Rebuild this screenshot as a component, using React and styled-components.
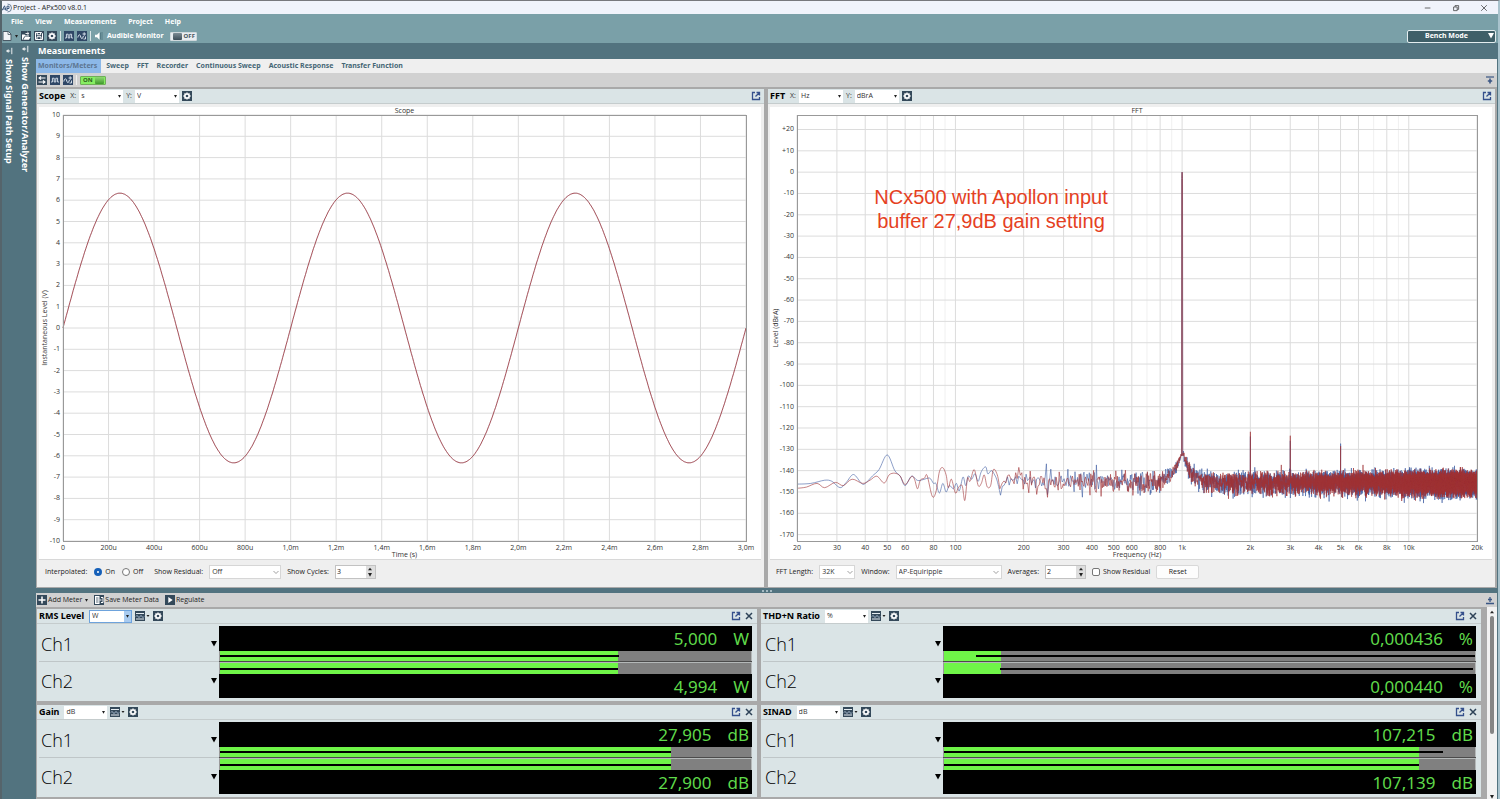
import React, { useLayoutEffect, useMemo, useRef, useState } from "react";
import styled, { createGlobalStyle, css } from "styled-components";

const Global = createGlobalStyle`
  * { box-sizing: border-box; }
  body { margin: 0; background: #fff; color: #222; font: 7px/10px "Open Sans", "Noto Sans", sans-serif; }
  button, input, select { font: inherit; color: inherit; margin: 0; padding: 0; border: 0; border-radius: 0; background: none; }
`;

const bold = css`
  font-family: "Noto Sans", "Open Sans", sans-serif;
  font-weight: 700;
`;

/* ---------- window frame ---------- */
const Window = styled.div`
  height: 100vh;
  display: flex;
  flex-direction: column;
  overflow: hidden;
  border-top: 1px solid #77787d;
  border-left: 2px solid #55646b;
  border-right: 2px solid #a9c3cd;
`;
const TitleBar = styled.header`
  height: 13px;
  flex: none;
  display: flex;
  align-items: center;
  gap: 1px;
  padding-right: 10px;
  background: #f0f3fb;
  color: #222;
`;
const TitleText = styled.h1`
  margin: 0;
  flex: 1;
  font-size: 7px;
  font-weight: 400;
`;
const WindowButton = styled.button`
  width: 8px;
  height: 10px;
  margin-left: 19px;
  display: grid;
  place-items: center;
`;
const MenuBar = styled.nav`
  height: 15px;
  flex: none;
  display: flex;
  align-items: center;
  gap: 12px;
  padding: 1px 0 0 9px;
  background: #7aa0a8;
`;
const MenuItem = styled.button`
  ${bold}
  color: #fff;
`;
const MainTools = styled.div`
  ${bold}
  height: 14px;
  flex: none;
  display: flex;
  align-items: center;
  gap: 3px;
  padding-right: 2px;
  background: #7aa0a8;
  color: #fff;
`;
const Spacer = styled.div`
  flex: 1;
`;
const Divider = styled.span`
  width: 1px;
  height: 10px;
  background: ${(p) => p.$color || "#dbe6e8"};
`;
const IconButton = styled.button`
  width: ${(p) => (p.$wide ? 15 : 10)}px;
  height: 10px;
  display: grid;
  place-items: center;
  flex: none;
`;
const Toggle = styled.button`
  ${bold}
  height: 9px;
  display: flex;
  align-items: center;
  gap: 2px;
  margin-left: ${(p) => (p.$on ? 0 : 3)}px;
  padding: 0 1px 0 2px;
  border-radius: 1px;
  font-size: 6px;
  line-height: 8px;
  color: ${(p) => (p.$on ? "#2c5d1d" : "#45545c")};
  background: ${(p) => (p.$on ? "#86ee62" : "#e9edf1")};
  border: 1px solid ${(p) => (p.$on ? "#6fae58" : "#cfd8dc")};
  flex-direction: ${(p) => (p.$on ? "row" : "row-reverse")};
  &::after {
    content: "";
    width: 9px;
    height: 7px;
    border-radius: 1px;
    background: ${(p) => (p.$on ? "linear-gradient(#8fd873,#3f9a2c)" : "linear-gradient(#7d8c95,#3c4d58)")};
  }
`;
const BenchMode = styled.button`
  ${bold}
  width: 89px;
  height: 13px;
  display: flex;
  align-items: center;
  padding: 0 1px 0 17px;
  border: 1px solid #e4edef;
  border-radius: 2px;
  background: #3f5f68;
  color: #fff;
  span { flex: 1; text-align: left; }
`;

/* ---------- body ---------- */
const Body = styled.div`
  flex: 1;
  min-height: 0;
  display: flex;
  background: #52737f;
`;
const Rail = styled.aside`
  width: 34px;
  flex: none;
  display: flex;
  align-items: flex-start;
  gap: 3px;
`;
const RailTab = styled.button`
  width: 13px;
  padding-top: ${(p) => (p.$first ? 4 : 2)}px;
  display: flex;
  flex-direction: column;
  align-items: center;
  gap: 4px;
  color: #fff;
  span {
    ${bold}
    writing-mode: vertical-rl;
    font-size: 9px;
    line-height: 10px;
    white-space: nowrap;
  }
`;
const Main = styled.main`
  flex: 1;
  min-width: 0;
  display: flex;
  flex-direction: column;
`;
const SectionTitle = styled.h2`
  ${bold}
  height: 16px;
  flex: none;
  margin: 0;
  padding-left: 2px;
  color: #fff;
  font-size: 9px;
  line-height: 16px;
`;
const Tabs = styled.nav`
  height: 14px;
  flex: none;
  display: flex;
  gap: 3px;
  margin-right: 1px;
  background: #efefef;
`;
const Tab = styled.button`
  ${bold}
  padding: 0 3px 0 2px;
  line-height: 14px;
  color: ${(p) => (p.$active ? "#5c7591" : "#446675")};
  background: ${(p) => (p.$active ? "#8cb8e8" : "transparent")};
  &:first-child { padding-right: 4px; }
`;
const ToolStrip = styled.div`
  height: 14px;
  flex: none;
  display: flex;
  align-items: center;
  gap: ${(p) => p.$gap || 3}px;
  padding: 0 2px 0 1px;
  margin-right: 1px;
  background: #d1d1d1;
`;
const TextButton = styled.button`
  display: flex;
  align-items: center;
  gap: 1px;
  svg:last-child { margin-left: ${(p) => (p.$menu ? 2 : 0)}px; }
`;

/* ---------- graph panels ---------- */
const Graphs = styled.div`
  flex: 1;
  min-height: 0;
  display: grid;
  grid-template-columns: repeat(2, minmax(0, 1fr));
  gap: 4px;
  padding: 2px 2px 1px 1px;
  margin-right: 1px;
  background: #a9a9a9;
`;
const Panel = styled.section`
  min-width: 0;
  display: flex;
  flex-direction: column;
  background: #efefef;
`;
const PanelHead = styled.div`
  height: 15px;
  flex: none;
  display: flex;
  align-items: center;
  gap: 3px;
  padding: 0 3px 0 2px;
  background: #dae4e6;
  border-bottom: 1px solid #c5cccd;
  h3 { ${bold} margin: 0 2px 0 0; font-size: 9px; color: #000; white-space: nowrap; }
  label { display: flex; align-items: center; gap: 3px; color: #333; }
`;
const SelectBox = styled.span`
  display: inline-grid;
  align-items: center;
  width: ${(p) => p.$width}px;
  height: ${(p) => p.$height || 13}px;
  background: #fff;
  color: #333;
  ${(p) => p.$framed && css`border: 1px solid #d6d6d6;`}
  ${(p) => p.$focused && css`border: 1px solid #6ea3dc;`}
  > * { grid-area: 1 / 1; }
  select {
    appearance: none;
    width: 100%;
    height: 100%;
    padding-left: 2px;
    outline: 0;
  }
`;
const SelectArrow = styled.span`
  justify-self: end;
  height: 100%;
  width: 7px;
  margin-right: ${(p) => (p.$inset ? 1 : 0)}px;
  display: grid;
  place-items: center;
  pointer-events: none;
  background: ${(p) => (p.$focused ? "#a9cbf0" : "transparent")};
`;
const ChartArea = styled.div`
  flex: 1;
  min-height: 0;
  margin: 3px 3px 0 2px;
  background: #fff;
  overflow: hidden;
  border-bottom: 1px solid #d8d8d8;
  svg { display: block; }
`;
const Controls = styled.form`
  height: 27px;
  flex: none;
  display: flex;
  align-items: center;
  gap: 6px;
  padding: 0 8px 3px;
  color: #222;
`;
const RadioGroup = styled.span`
  display: flex;
  gap: 7px;
  margin: 0 5px 0 1px;
`;
const Field = styled.label`
  display: flex;
  align-items: center;
  gap: ${(p) => p.$gap || 6}px;
  white-space: nowrap;
`;
const Radio = styled.input`
  appearance: none;
  width: 8px;
  height: 8px;
  border: 1px solid #777;
  border-radius: 50%;
  background: #fff;
  &:checked { border: 3px solid #1660b8; }
`;
const Check = styled.input`
  appearance: none;
  width: 8px;
  height: 8px;
  border: 1px solid #777;
  border-radius: 2px;
  background: #fff;
`;
const Spin = styled.span`
  display: flex;
  width: 41px;
  height: 14px;
  border: 1px solid #c2c2c2;
  background: #fff;
  input { flex: 1; min-width: 0; padding: 0 1px 1px; outline: 0; }
`;
const SpinButtons = styled.span`
  width: 9px;
  display: grid;
  grid-template-rows: 1fr 1fr;
  background: #dedede;
  button { display: grid; place-items: center; }
`;
const ResetButton = styled.button`
  width: 43px;
  height: 14px;
  border: 1px solid #d9d9d9;
  border-radius: 2px;
  background: #fdfdfd;
`;
const Splitter = styled.div`
  height: 5px;
  flex: none;
  display: flex;
  justify-content: center;
  align-items: center;
  gap: 2px;
  i { width: 2px; height: 2px; background: #a5bac2; }
`;

/* ---------- meters ---------- */
const Meters = styled.div`
  height: 192px;
  flex: none;
  display: flex;
  margin-right: 1px;
  overflow: hidden;
  background: #a9a9a9;
`;
const MeterGrid = styled.div`
  flex: 1;
  min-width: 0;
  display: grid;
  grid-template-columns: repeat(2, minmax(0, 1fr));
  grid-auto-rows: 92px;
  gap: 4px;
  padding: 2px 6px 2px 1px;
`;
const MeterCard = styled.section`
  display: flex;
  flex-direction: column;
  background: #dae4e6;
`;
const MeterBody = styled.div`
  display: grid;
  grid-template-columns: 180px minmax(0, 1fr);
  padding: 2px 5px 0 2px;
`;
const Channel = styled.div`
  height: 36px;
  display: flex;
  align-items: center;
  justify-content: space-between;
  padding: 1px 2px 0;
  border-bottom: ${(p) => (p.$second ? "0" : "1px solid #bfc6c8")};
  font: 300 18px/24px "Open Sans", "Noto Sans", sans-serif;
  color: #000;
`;
const Readout = styled.div`
  height: 36px;
  display: flex;
  flex-direction: ${(p) => (p.$second ? "column-reverse" : "column")};
  justify-content: flex-start;
  border-bottom: ${(p) => (p.$second ? "0" : "1px solid #4b4b4b")};
`;
const Value = styled.div`
  height: ${(p) => (p.$second ? 24 : 25)}px;
  display: flex;
  align-items: center;
  justify-content: flex-end;
  gap: 16px;
  padding-right: 3px;
  padding-top: 1px;
  background: #000;
  color: #5fd94a;
  font: 17px/24px "Noto Sans", sans-serif;
`;
const Track = styled.div`
  height: ${(p) => (p.$second ? 12 : 10)}px;
  display: grid;
  align-items: center;
  border: solid #b4b8b8;
  border-width: ${(p) => (p.$second ? "1px 1px 0 0" : "0 1px 0 0")};
  border-left: 1px solid #9a9a9a;
  background: #808080;
  > * { grid-area: 1 / 1; }
`;
const Fill = styled.span`
  height: 100%;
  background: #6ff548;
`;
const Line = styled.span`
  height: 2px;
  background: #000;
`;
const ScrollBar = styled.div`
  width: 10px;
  flex: none;
  display: flex;
  flex-direction: column;
  align-items: center;
  justify-content: space-between;
  padding: 3px 0 0;
  background: #f2f2f2;
`;
const Thumb = styled.div`
  width: 4px;
  height: 118px;
  margin: 2px 0 auto;
  border-radius: 2px;
  background: #858585;
`;

/* ---------- icons ---------- */
const DARK = "#34495a";
const ICONS = {
  gear: (
    <>
      <rect width="10" height="10" fill={DARK} />
      <path d="M5 1.4v7.200M1.400 5h7.200M2.500 2.500l5 5M2.500 7.500l5-5" stroke="#fff" strokeWidth="1.300" />
      <circle cx="5" cy="5" r="2.100" fill={DARK} stroke="#fff" strokeWidth="1.500" />
    </>
  ),
  pulse: (
    <>
      <rect width="10" height="10" fill="#2f4766" />
      <path d="M1 7h1.400V3.200h1.800V7h1.600V3.200h1.800V7H9" fill="none" stroke="#dfe8f2" strokeWidth=".9" />
    </>
  ),
  sweep: (
    <>
      <rect width="10" height="10" fill="#2f4766" />
      <path d="M.8 6.500c1-3.600 2-3.600 3-.5s1.800 1.500 2.600-1" fill="none" stroke="#dfe8f2" strokeWidth="1" />
      <path d="M5.500 3h3.500M7.200 1.300v3.500M8.500 5.500v2.500H6.500" fill="none" stroke="#dfe8f2" strokeWidth=".9" />
    </>
  ),
  file: (
    <>
      <path d="M1 .5h5.500l2.500 2.500v6.500H1z" fill="#f3f5f7" stroke="#4a5a66" />
      <path d="M6 .5v3h3" fill="none" stroke="#4a5a66" strokeWidth=".8" />
    </>
  ),
  open: (
    <>
      <rect width="10" height="10" fill={DARK} />
      <path d="M1 8.800V3.500h2.500l1 1H8v1H3.200L1.600 8.800z M2.300 8.800l1.600-2.700H9.500L8 8.800z" fill="#fff" />
      <path d="M4.500 2.500h3M6.300 1l1.600 1.500L6.300 4" fill="none" stroke="#fff" strokeWidth=".9" />
    </>
  ),
  save: (
    <>
      <rect width="10" height="10" fill={DARK} />
      <path d="M1.500 1.500h6l1 1v6h-7z" fill="none" stroke="#fff" />
      <path d="M3.200 1.500v2.300h3.400V1.500M3 8.500V5.700h4v2.800" fill="none" stroke="#fff" />
    </>
  ),
  route: (
    <>
      <rect width="10" height="10" fill={DARK} />
      <path d="M2.500 3h6M1.500 7h6M4 1.300L2 3l2 1.700M6 5.300L8 7 6 8.700" fill="none" stroke="#fff" strokeWidth="1.100" />
    </>
  ),
  plus: (
    <>
      <rect width="10" height="10" fill={DARK} />
      <path d="M5 1.500v7M1.500 5h7" stroke="#fff" strokeWidth="1.500" />
    </>
  ),
  saveData: (
    <>
      <rect width="10" height="10" fill={DARK} />
      <path d="M1 1h4.500v8H1z" fill="#fff" />
      <path d="M2 3h2.500M2 5h2.500M2 7h2.500" stroke={DARK} strokeWidth=".8" />
      <path d="M5.500 5h2M7 2.500h2v5H7" fill="none" stroke="#fff" strokeWidth="1" />
    </>
  ),
  play: (
    <>
      <rect width="10" height="10" fill={DARK} />
      <path d="M3.300 2l4.400 3-4.400 3z" fill="#fff" />
    </>
  ),
  popout: (
    <path d="M4 1.500H1.500v7h7V6M5.500 1.500h3v3M8.300 1.700L4.500 5.500" fill="none" stroke="#35508c" strokeWidth="1.300" />
  ),
  close: <path d="M2 2l6 6M8 2L2 8" stroke="#2d4257" strokeWidth="1.500" />,
  speaker: (
    <>
      <path d="M1 3.800h2l2.500-2.500v7.400L3 6.200H1z" fill="#fff" />
      <path d="M6.500 1.500v7M8 1v8" stroke="#557c86" strokeWidth="1" />
    </>
  ),
  collapseDown: (
    <>
      <path d="M1 2h8" stroke="#3a5684" strokeWidth="1.200" />
      <path d="M5 3.500v5M2.800 6h4.400" stroke="#3a5684" strokeWidth="1.600" />
    </>
  ),
  collapseUp: <path d="M1 8.500h8M5 7V2M3 4.500h4" fill="none" stroke="#3a5684" strokeWidth="1.300" />,
  dock: <path d="M8.500 1v8M1.500 5h5M4 3v4M3 4v2" fill="none" stroke="#fff" strokeWidth="1.100" />,
  minimize: <path d="M1 5h7" stroke="#333" strokeWidth=".9" />,
  restore: <path d="M2 3.700h4.500v4.600H2zM3.800 3.500V2h4.500v4.700H6.700" fill="none" stroke="#333" strokeWidth=".9" />,
  exit: <path d="M1.500 1.500l7 7M8.500 1.500l-7 7" stroke="#333" strokeWidth=".9" />,
  logo: (
    <>
      <path d="M5.500 1a4 4 0 0 1 0 8" fill="none" stroke="#6f8299" strokeWidth="1" />
      <path d="M0 7.500L2.500 2.800 4 7.500M1 6h3M5 8V3.200h2v2.300H5" fill="none" stroke="#2d4c74" strokeWidth=".9" />
    </>
  ),
};
const Icon = ({ name, size = 10 }) => (
  <svg width={size} height={size} viewBox="0 0 10 10" aria-hidden="true">{ICONS[name]}</svg>
);
const DisplayIcon = () => (
  <svg width="15" height="10" viewBox="0 0 15 10" aria-hidden="true">
    <rect width="10" height="10" fill={DARK} />
    <path d="M1 2.500h8M1 8h8" stroke="#e6edf2" />
    <path d="M1 5.500q1-2 2 0t2 0t2 0t2 0" fill="none" stroke="#b8cbe0" />
    <path d="M11.500 4h3L13 6z" fill="#222" />
  </svg>
);
const Caret = ({ size = 4, color = "#222" }) => (
  <svg width={size} height={size} viewBox="0 0 6 6" aria-hidden="true"><path d="M0 0h6L3 5.500z" fill={color} /></svg>
);
const CaretUp = () => (
  <svg width="4" height="4" viewBox="0 0 6 6" aria-hidden="true"><path d="M0 5h6L3 1z" fill="#222" /></svg>
);
const Chevron = () => (
  <svg width="6" height="6" viewBox="0 0 6 6" aria-hidden="true"><path d="M.5 2L3 4.500 5.500 2" fill="none" stroke="#888" strokeWidth=".8" /></svg>
);

function Select({ label, value, width, height, framed, focused }) {
  return (
    <SelectBox $width={width} $height={height} $framed={framed} $focused={focused}>
      <select aria-label={label} defaultValue={value}><option>{value}</option></select>
      <SelectArrow $focused={focused} $inset={framed}>{framed ? <Chevron /> : <Caret size={3} />}</SelectArrow>
    </SelectBox>
  );
}
function Stepper({ id, value }) {
  return (
    <Spin>
      <input id={id} type="text" defaultValue={value} />
      <SpinButtons>
        <button type="button" aria-label="Increase"><CaretUp /></button>
        <button type="button" aria-label="Decrease"><Caret /></button>
      </SpinButtons>
    </Spin>
  );
}

/* ---------- charts ---------- */
const FONT = '"Open Sans", "Noto Sans", sans-serif';
const BLUE = "#3f5ea3";
const RED = "#a03236";

function useSize() {
  const ref = useRef(null);
  const [size, setSize] = useState({ width: 0, height: 0 });
  useLayoutEffect(() => {
    const measure = () => setSize({ width: ref.current.clientWidth, height: ref.current.clientHeight });
    measure();
    const observer = new ResizeObserver(measure);
    observer.observe(ref.current);
    return () => observer.disconnect();
  }, []);
  return [ref, size];
}

function Chart({ title, xLabel, yLabel, xTicks, yTicks, xOf, yOf, margin, traces, children }) {
  const [ref, { width, height }] = useSize();
  const plotW = width - margin.left - margin.right;
  const plotH = height - margin.top - margin.bottom;
  const X = (v) => margin.left + xOf(v) * plotW;
  const Y = (v) => margin.top + yOf(v) * plotH;
  const right = margin.left + plotW;
  const bottom = margin.top + plotH;
  return (
    <ChartArea ref={ref}>
      {width > 0 && (
        <svg width={width} height={height} fontFamily={FONT} fontSize="7" fill="#333">
          {xTicks.map((t) => (
            <line key={t.v} x1={X(t.v)} x2={X(t.v)} y1={margin.top} y2={bottom} stroke={t.faint ? "#f0f0f0" : "#dcdcdc"} />
          ))}
          {yTicks.map((t) => (
            <line key={t.v} x1={margin.left} x2={right} y1={Y(t.v)} y2={Y(t.v)} stroke="#dcdcdc" />
          ))}
          {traces.map((t) => (
            <path key={t.color} d={t.path(X, Y)} fill="none" stroke={t.color} strokeOpacity={t.opacity} strokeWidth={t.width} strokeLinejoin="bevel" />
          ))}
          <rect x={margin.left} y={margin.top} width={plotW} height={plotH} fill="none" stroke="#999" shapeRendering="crispEdges" />
          {xTicks.filter((t) => t.label).map((t) => (
            <text key={t.v} x={X(t.v)} y={bottom + 9} textAnchor="middle">{t.label}</text>
          ))}
          {yTicks.map((t) => (
            <text key={t.v} x={margin.left - 3} y={Y(t.v) + 2} textAnchor="end">{t.label}</text>
          ))}
          <text x={margin.left + plotW / 2} y={margin.top - 2} textAnchor="middle">{title}</text>
          <text x={margin.left + plotW / 2} y={bottom + 16} textAnchor="middle">{xLabel}</text>
          <text transform={`translate(8 ${margin.top + plotH / 2}) rotate(-90)`} textAnchor="middle">{yLabel}</text>
          {children}
        </svg>
      )}
    </ChartArea>
  );
}

const timeLabels = ["0", "200u", "400u", "600u", "800u", "1,0m", "1,2m", "1,4m", "1,6m", "1,8m", "2,0m", "2,2m", "2,4m", "2,6m", "2,8m", "3,0m"];
const scopeX = timeLabels.map((label, i) => ({ v: i * 0.2, label }));
const scopeY = Array.from({ length: 21 }, (_, i) => ({ v: 10 - i, label: String(10 - i) }));
const sinePath = (X, Y) => {
  let d = "";
  for (let i = 0; i <= 600; i++) {
    const t = i / 200;
    d += `${i ? "L" : "M"}${X(t).toFixed(1)} ${Y(6.33 * Math.sin(2 * Math.PI * t)).toFixed(1)}`;
  }
  return d;
};
const sineTraces = [
  { color: BLUE, opacity: 0.2, width: 1, path: sinePath },
  { color: RED, opacity: 0.8, width: 1, path: sinePath },
];

const fftX = [];
[10, 100, 1000, 10000].forEach((decade) => {
  for (let n = 1; n < 10; n++) {
    const v = n * decade;
    if (v < 20 || v > 20000) continue;
    const labelled = n !== 7 && n !== 9;
    fftX.push({ v, faint: !labelled, label: labelled ? (v >= 1000 ? `${v / 1000}k` : String(v)) : "" });
  }
});
const fftY = Array.from({ length: 20 }, (_, i) => {
  const v = 20 - i * 10;
  return { v, label: v > 0 ? `+${v}` : String(v) };
});

const LOW_BLUE = [[20, -146.3], [23, -146], [26.5, -144.5], [28.5, -145], [31, -148], [33, -145.5], [35.5, -141.8], [38.5, -146], [40, -146], [43, -142.5], [46, -139.5], [50, -132.6], [54, -140], [57, -142.5], [60, -147], [64, -142.6], [68, -144.6], [72, -144.2], [77, -143.5], [80, -146], [82, -146], [85, -150.5], [88, -146], [91, -150], [94, -147], [98, -148.5], [101, -146], [104, -149.5], [108, -143], [111, -147], [114, -142.5], [118, -144], [122, -141.5], [126, -145], [130, -140.5], [136, -138.2], [139, -141.5], [144, -140], [149, -142], [153, -145], [158, -151.5]];
const LOW_RED = [[20, -148.3], [22, -147.7], [24.5, -146], [26.5, -148], [29.5, -145.5], [32, -147], [35, -144], [39, -146], [42, -144.5], [45, -142.6], [48.5, -145.8], [51, -142], [54, -141.2], [57, -142.5], [60, -146.5], [64, -142.8], [66, -144], [68, -148.5], [70, -144.5], [73, -143.5], [75, -142.3], [79, -152], [82, -150], [85, -140.5], [88, -138.6], [91, -142], [93, -148], [96, -144], [100, -150.5], [103, -148], [107, -147], [110, -154], [113, -143.5], [116, -145], [121, -139.5], [126, -147], [130, -146], [134, -142], [138, -147.5], [143, -147], [147, -139.5], [153, -142], [157, -148.5]];

/* Curve through the points, with tangents taken from the neighbours. */
function smooth(p) {
  const at = (i) => p[Math.max(0, Math.min(p.length - 1, i))];
  let d = `M${at(0)[0].toFixed(1)} ${at(0)[1].toFixed(1)}`;
  for (let i = 0; i < p.length - 1; i++) {
    const [a, b, c, e] = [at(i - 1), at(i), at(i + 1), at(i + 2)];
    const pts = [b[0] + (c[0] - a[0]) / 6, b[1] + (c[1] - a[1]) / 6, c[0] - (e[0] - b[0]) / 6, c[1] - (e[1] - b[1]) / 6, c[0], c[1]];
    d += `C${pts.map((n) => n.toFixed(1)).join(" ")}`;
  }
  return d;
}

function makeSpectrum(low, seed, harmonics) {
  let s = seed;
  const rand = () => {
    s = (s * 1664525 + 1013904223) % 4294967296;
    return s / 4294967296;
  };
  const noise = [];
  const step = 2.93;
  for (let f = 161; f <= 20000; f += step) {
    let g = 0;
    for (let k = 0; k < 6; k++) g += rand();
    g = (g - 3) * 1.414;
    const skirt = 15 * Math.exp(-Math.abs(Math.log(f / 1000)) / 0.075);
    const spread = g > 0 ? g * 2.3 : g * 3;
    let level = -145.2 + spread * (1 - skirt / 22) + skirt;
    const h = harmonics.find((item) => Math.abs(item[0] - f) <= step / 2);
    if (h) level = h[1];
    if (Math.abs(f - 1000) < 6) continue;
    if (noise.length && noise[noise.length - 1][0] < 1000 && f > 1000) {
      noise.push([994, -133], [996, -3], [1000, 0], [1004, -3], [1006, -133]);
    }
    noise.push([f, level]);
  }
  return (X, Y) =>
    smooth(low.map(([f, l]) => [X(f), Y(l)])) +
    noise.map(([f, l]) => `L${X(f).toFixed(1)} ${Y(l).toFixed(1)}`).join("");
}

function FftChart() {
  const traces = useMemo(() => [
    { color: BLUE, opacity: 0.75, width: 0.8, path: makeSpectrum(LOW_BLUE, 77, [[252, -136.8], [2000, -124], [3000, -126], [5000, -127.3]]) },
    { color: RED, opacity: 0.75, width: 0.8, path: makeSpectrum(LOW_RED, 4211, [[189, -138.5], [256, -152.5], [2000, -121.8], [3000, -123.6], [5000, -128.5]]) },
  ], []);
  return (
    <Chart
      title="FFT" xLabel="Frequency (Hz)" yLabel="Level (dBrA)"
      xTicks={fftX} yTicks={fftY} traces={traces}
      margin={{ left: 27, right: 15, top: 8, bottom: 18 }}
      xOf={(f) => Math.log10(f / 20) / 3}
      yOf={(v) => (26.8 - v) / 199.8}
    >
      <g fontFamily='"Liberation Sans", Arial, sans-serif' fontSize="20" fill="#e5411f" textAnchor="middle">
        <text x="221" y="97">NCx500 with Apollon input</text>
        <text x="221" y="121">buffer 27,9dB gain setting</text>
      </g>
    </Chart>
  );
}

function GraphHead({ title, x, y }) {
  return (
    <PanelHead>
      <h3>{title}</h3>
      <label>X: <Select label={`${title} X unit`} value={x} width={44} /></label>
      <label>Y: <Select label={`${title} Y unit`} value={y} width={44} /></label>
      <IconButton aria-label={`${title} settings`}><Icon name="gear" /></IconButton>
      <Spacer />
      <IconButton aria-label={`Undock ${title}`}><Icon name="popout" /></IconButton>
    </PanelHead>
  );
}

const meters = [
  { title: "RMS Level", unit: "W", focused: true, channels: [{ value: "5,000", fill: 75, line: [0, 75.2] }, { value: "4,994", fill: 74.9, line: [0, 74.9] }] },
  { title: "THD+N Ratio", unit: "%", channels: [{ value: "0,000436", fill: 10.8, line: [6, 100] }, { value: "0,000440", fill: 10.7, line: [10.6, 99.6] }] },
  { title: "Gain", unit: "dB", channels: [{ value: "27,905", fill: 85, line: [0, 85] }, { value: "27,900", fill: 85, line: [0, 85] }] },
  { title: "SINAD", unit: "dB", channels: [{ value: "107,215", fill: 89.4, line: [0, 94] }, { value: "107,139", fill: 89.4, line: [0, 89.4] }] },
];

function Meter({ title, unit, focused, channels }) {
  return (
    <MeterCard>
      <PanelHead>
        <h3>{title}</h3>
        <Select label={`${title} unit`} value={unit} width={43} focused={focused} />
        <IconButton $wide aria-label={`${title} display`}><DisplayIcon /></IconButton>
        <IconButton aria-label={`${title} settings`}><Icon name="gear" /></IconButton>
        <Spacer />
        <IconButton aria-label={`Undock ${title}`}><Icon name="popout" /></IconButton>
        <IconButton aria-label={`Close ${title}`}><Icon name="close" /></IconButton>
      </PanelHead>
      <MeterBody>
        {channels.map((c, i) => (
          <React.Fragment key={c.value}>
            <Channel $second={i === 1}>Ch{i + 1}<Caret size={6} color="#000" /></Channel>
            <Readout $second={i === 1}>
              <Value $second={i === 1}><span>{c.value}</span><span>{unit}</span></Value>
              <Track $second={i === 1}>
                <Fill style={{ width: `${c.fill}%` }} />
                <Line style={{ marginLeft: `${c.line[0]}%`, width: `${c.line[1] - c.line[0]}%` }} />
              </Track>
            </Readout>
          </React.Fragment>
        ))}
      </MeterBody>
    </MeterCard>
  );
}

export default function App() {
  return (
    <>
      <Global />
      <Window>
        <TitleBar>
          <Icon name="logo" />
          <TitleText>Project - APx500 v8.0.1</TitleText>
          <WindowButton aria-label="Minimize"><Icon name="minimize" size={8} /></WindowButton>
          <WindowButton aria-label="Restore"><Icon name="restore" size={8} /></WindowButton>
          <WindowButton aria-label="Close"><Icon name="exit" size={8} /></WindowButton>
        </TitleBar>
        <MenuBar>
          {["File", "View", "Measurements", "Project", "Help"].map((m) => <MenuItem key={m}>{m}</MenuItem>)}
        </MenuBar>
        <MainTools>
          <IconButton aria-label="New"><Icon name="file" /></IconButton>
          <Caret size={3} />
          <IconButton aria-label="Open"><Icon name="open" /></IconButton>
          <IconButton aria-label="Save"><Icon name="save" /></IconButton>
          <IconButton aria-label="Settings"><Icon name="gear" /></IconButton>
          <Divider />
          <IconButton aria-label="Generator"><Icon name="pulse" /></IconButton>
          <IconButton aria-label="Sweep"><Icon name="sweep" /></IconButton>
          <Divider />
          <Icon name="speaker" />
          <span>Audible Monitor</span>
          <Toggle>OFF</Toggle>
          <Spacer />
          <BenchMode><span>Bench Mode</span><Caret size={6} color="#fff" /></BenchMode>
        </MainTools>
        <Body>
          <Rail>
            <RailTab $first><Icon name="dock" size={8} /><span>Show Signal Path Setup</span></RailTab>
            <RailTab><Icon name="dock" size={8} /><span>Show Generator/Analyzer</span></RailTab>
          </Rail>
          <Main>
            <SectionTitle>Measurements</SectionTitle>
            <Tabs>
              {["Monitors/Meters", "Sweep", "FFT", "Recorder", "Continuous Sweep", "Acoustic Response", "Transfer Function"].map((t, i) => (
                <Tab key={t} $active={i === 0}>{t}</Tab>
              ))}
            </Tabs>
            <ToolStrip>
              <IconButton aria-label="Signal path"><Icon name="route" /></IconButton>
              <IconButton aria-label="Generator"><Icon name="pulse" /></IconButton>
              <IconButton aria-label="Sweep"><Icon name="sweep" /></IconButton>
              <Divider $color="#efefef" />
              <Toggle $on>ON</Toggle>
              <Spacer />
              <IconButton aria-label="Collapse"><Icon name="collapseDown" /></IconButton>
            </ToolStrip>
            <Graphs>
              <Panel>
                <GraphHead title="Scope" x="s" y="V" />
                <Chart
                  title="Scope" xLabel="Time (s)" yLabel="Instantaneous Level (V)"
                  xTicks={scopeX} yTicks={scopeY} traces={sineTraces}
                  margin={{ left: 24, right: 15, top: 8, bottom: 18 }}
                  xOf={(t) => t / 3}
                  yOf={(v) => (10 - v) / 20}
                />
                <Controls>
                  <span>Interpolated:</span>
                  <RadioGroup>
                    <Field $gap={3}><Radio type="radio" name="interpolated" defaultChecked />On</Field>
                    <Field $gap={3}><Radio type="radio" name="interpolated" />Off</Field>
                  </RadioGroup>
                  <Field>Show Residual: <Select label="Show Residual" value="Off" width={72} height={14} framed /></Field>
                  <Field htmlFor="cycles">Show Cycles: <Stepper id="cycles" value="3" /></Field>
                </Controls>
              </Panel>
              <Panel>
                <GraphHead title="FFT" x="Hz" y="dBrA" />
                <FftChart />
                <Controls>
                  <Field>FFT Length: <Select label="FFT Length" value="32K" width={36} height={14} framed /></Field>
                  <Field>Window: <Select label="Window" value="AP-Equiripple" width={106} height={14} framed /></Field>
                  <Field htmlFor="averages">Averages: <Stepper id="averages" value="2" /></Field>
                  <Field $gap={3}><Check type="checkbox" />Show Residual</Field>
                  <ResetButton type="button">Reset</ResetButton>
                </Controls>
              </Panel>
            </Graphs>
            <Splitter><i /><i /><i /></Splitter>
            <ToolStrip $gap={6}>
              <TextButton $menu><Icon name="plus" />Add Meter<Caret size={3} /></TextButton>
              <TextButton><Icon name="saveData" />Save Meter Data</TextButton>
              <TextButton><Icon name="play" />Regulate</TextButton>
              <Spacer />
              <IconButton aria-label="Expand"><Icon name="collapseUp" /></IconButton>
            </ToolStrip>
            <Meters>
              <MeterGrid>
                {meters.map((m) => <Meter key={m.title} {...m} />)}
              </MeterGrid>
              <ScrollBar>
                <CaretUp />
                <Thumb />
                <Caret />
              </ScrollBar>
            </Meters>
          </Main>
        </Body>
      </Window>
    </>
  );
}
